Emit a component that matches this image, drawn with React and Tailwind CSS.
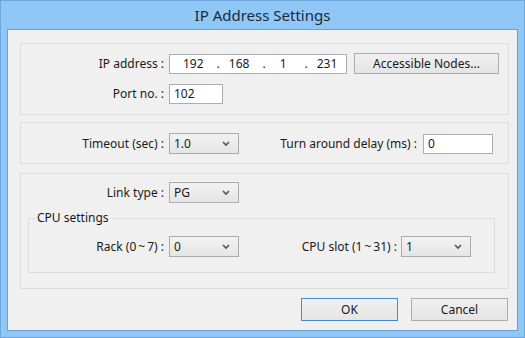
const font = { fontFamily: '"Noto Sans", "Open Sans", sans-serif' };

function Chevron() {
  return (
    <svg width="8" height="6" viewBox="0 0 8 6" className="shrink-0">
      <path d="M1 1 L4 4 L7 1" fill="none" stroke="#555" strokeWidth="1.6" />
    </svg>
  );
}

function Select({ value, w = "w-[70px]" }) {
  return (
    <div
      className={`${w} h-[21px] flex items-center justify-between pl-[4px] pr-[8px] border border-[#acacac] bg-gradient-to-b from-[#f2f2f2] to-[#e5e5e5]`}
    >
      <span>{value}</span>
      <Chevron />
    </div>
  );
}

function Field({ value, w }) {
  return (
    <div className={`${w} h-[20px] flex items-center pl-[4px] border border-[#abadb3] bg-white`}>
      {value}
    </div>
  );
}

function Button({ children, primary }) {
  return (
    <div
      className={`w-[97px] h-[23px] flex items-center justify-center border bg-gradient-to-b from-[#f0f0f0] to-[#e5e5e5] ${
        primary ? "border-[#3c8fd6]" : "border-[#acacac]"
      }`}
    >
      {children}
    </div>
  );
}

export default function App() {
  return (
    <div
      className="w-[525px] h-[338px] flex flex-col border border-[#6fa6dc] bg-[#8fc7f7] text-[12px] leading-[16px] text-[#1a1a1a]"
      style={font}
    >
      {/* title bar */}
      <div className="h-[28px] flex items-center justify-center text-[15px] text-[#1d2a3a]">
        IP Address Settings
      </div>

      {/* client area */}
      <div className="mx-[6px] h-[302px] border border-[#6d9fd3] bg-[#f0f0f0] pt-[13px] pl-[12px] pr-[8px]">
        {/* connection group */}
        <div className="h-[72px] border border-[#dcdcdc] pt-[9px]">
          <div className="flex items-center h-[21px]">
            <div className="w-[143px] text-right">IP address :</div>
            <div className="ml-[5px] w-[178px] h-[20px] flex items-center border border-[#abadb3] bg-white">
              <span className="ml-[13px]">192</span>
              <span className="ml-[13px]">.</span>
              <span className="ml-[9px]">168</span>
              <span className="ml-[13px]">.</span>
              <span className="ml-[14px]">1</span>
              <span className="ml-[18px]">.</span>
              <span className="ml-[9px]">231</span>
            </div>
            <div className="ml-[7px] w-[145px] h-[21px] flex items-center justify-center border border-[#acacac] bg-gradient-to-b from-[#f0f0f0] to-[#e5e5e5]">
              Accessible Nodes...
            </div>
          </div>
          <div className="flex items-center mt-[10px]">
            <div className="w-[143px] text-right">Port no. :</div>
            <div className="ml-[5px]">
              <Field value="102" w="w-[54px]" />
            </div>
          </div>
        </div>

        {/* timing group */}
        <div className="mt-[7px] h-[42px] border border-[#dcdcdc] pt-[10px]">
          <div className="flex items-center">
            <div className="w-[143px] text-right">Timeout (sec) :</div>
            <div className="ml-[5px]">
              <Select value="1.0" />
            </div>
            <div className="w-[178px] text-right">Turn around delay (ms) :</div>
            <div className="ml-[6px]">
              <Field value="0" w="w-[70px]" />
            </div>
          </div>
        </div>

        {/* link group */}
        <div className="mt-[9px] h-[116px] border border-[#dcdcdc] pt-[8px] px-[7px]">
          <div className="flex items-center">
            <div className="w-[136px] text-right">Link type :</div>
            <div className="ml-[5px]">
              <Select value="PG" />
            </div>
          </div>
          <fieldset className="mt-[8px] w-[467px] border border-[#dcdcdc] pb-[15px]">
            <legend className="ml-[6px] px-[2px] leading-[14px]">CPU settings</legend>
            <div className="flex items-center mt-[11px]">
              <div className="w-[135px] text-right">
                Rack (0<span className="mx-[2px]">~</span>7) :
              </div>
              <div className="ml-[5px]">
                <Select value="0" />
              </div>
              <div className="w-[158px] text-right">
                CPU slot (1<span className="mx-[2px]">~</span>31) :
              </div>
              <div className="ml-[4px]">
                <Select value="1" />
              </div>
            </div>
          </fieldset>
        </div>

        {/* buttons */}
        <div className="mt-[9px] flex justify-end gap-[13px] pr-[1px]">
          <Button primary>OK</Button>
          <Button>Cancel</Button>
        </div>
      </div>
    </div>
  );
}
